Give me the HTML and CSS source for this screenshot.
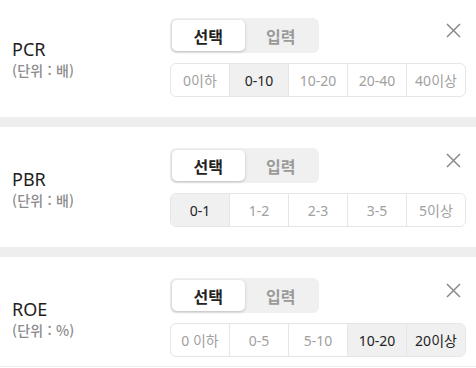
FILE: index.html
```html
<!DOCTYPE html>
<html lang="ko">
<head>
<meta charset="utf-8">
<title>필터</title>
<link rel="stylesheet" href="styles.css">
</head>
<body>
<div class="list">
  <section class="filter">
    <div class="label">
      <div class="name">PCR</div>
      <div class="unit">(단위 : 배)</div>
    </div>
    <div class="controls">
      <div class="top-row">
        <div class="toggle">
          <button class="tab active">선택</button>
          <button class="tab">입력</button>
        </div>
        <svg class="close" viewBox="0 0 15 15" width="15" height="15"><path d="M1 1L14 14M14 1L1 14" stroke="#8a8a8a" stroke-width="1.5" fill="none"/></svg>
      </div>
      <div class="segments">
        <div class="seg">0이하</div>
        <div class="seg on">0-10</div>
        <div class="seg">10-20</div>
        <div class="seg">20-40</div>
        <div class="seg">40이상</div>
      </div>
    </div>
  </section>
  <section class="filter">
    <div class="label">
      <div class="name">PBR</div>
      <div class="unit">(단위 : 배)</div>
    </div>
    <div class="controls">
      <div class="top-row">
        <div class="toggle">
          <button class="tab active">선택</button>
          <button class="tab">입력</button>
        </div>
        <svg class="close" viewBox="0 0 15 15" width="15" height="15"><path d="M1 1L14 14M14 1L1 14" stroke="#8a8a8a" stroke-width="1.5" fill="none"/></svg>
      </div>
      <div class="segments">
        <div class="seg on">0-1</div>
        <div class="seg">1-2</div>
        <div class="seg">2-3</div>
        <div class="seg">3-5</div>
        <div class="seg">5이상</div>
      </div>
    </div>
  </section>
  <section class="filter last">
    <div class="label">
      <div class="name">ROE</div>
      <div class="unit">(단위 : %)</div>
    </div>
    <div class="controls">
      <div class="top-row">
        <div class="toggle">
          <button class="tab active">선택</button>
          <button class="tab">입력</button>
        </div>
        <svg class="close" viewBox="0 0 15 15" width="15" height="15"><path d="M1 1L14 14M14 1L1 14" stroke="#8a8a8a" stroke-width="1.5" fill="none"/></svg>
      </div>
      <div class="segments">
        <div class="seg">0 이하</div>
        <div class="seg">0-5</div>
        <div class="seg">5-10</div>
        <div class="seg on">10-20</div>
        <div class="seg on">20이상</div>
      </div>
    </div>
  </section>
</div>
</body>
</html>
```
FILE: styles.css
```css
* { box-sizing: border-box; }
html, body { margin: 0; padding: 0; background: #fff; }
body {
  font-family: "Noto Sans", "Noto Sans CJK KR", sans-serif;
  color: #222;
}
.list { margin-top: -3px; }
.filter {
  display: flex;
  height: 120px;
  padding: 21px 10px 20px 0;
}
.filter + .filter { border-top: 10px solid #eeeeee; height: 130px; }
.filter.last { height: 120px; padding-bottom: 9px; border-bottom: 1px solid #ececec; }
.label {
  width: 170px;
  padding-left: 12px;
  display: flex;
  flex-direction: column;
  justify-content: center;
}
.name {
  font-size: 18px;
  line-height: 24px;
  color: #1e1e1e;
}
.unit {
  font-family: "Noto Sans CJK KR", sans-serif;
  font-size: 14px;
  line-height: 18px;
  font-weight: 500;
  color: #8c8c8c;
  letter-spacing: 0.2px;
}
.controls {
  flex: 1;
  display: flex;
  flex-direction: column;
  gap: 10px;
}
.top-row {
  display: flex;
  justify-content: space-between;
  align-items: flex-start;
}
.toggle {
  display: flex;
  width: 149px;
  height: 35px;
  padding: 2px;
  background: #f0f0f0;
  border-radius: 6px;
}
.tab {
  flex: 1;
  border: 0;
  background: transparent;
  font-family: "Noto Sans CJK KR", sans-serif;
  font-size: 16px;
  font-weight: 700;
  color: #9a9a9a;
  padding: 0;
  border-radius: 5px;
}
.tab.active {
  background: #fff;
  color: #222;
  box-shadow: 0 1px 3px rgba(0,0,0,0.22);
}
.close {
  margin-top: 5px;
  margin-right: 5px;
}
.segments {
  display: flex;
  height: 34px;
  border: 1px solid #e6e6e6;
  border-radius: 6px;
  overflow: hidden;
}
.seg {
  flex: 1;
  display: flex;
  align-items: center;
  justify-content: center;
  font-family: "Noto Sans", "Noto Sans CJK KR", sans-serif;
  font-size: 14px;
  color: #a0a0a0;
  white-space: nowrap;
}
.seg + .seg { border-left: 1px solid #e6e6e6; }
.seg.on { background: #f0f0f0; color: #222; }
```
